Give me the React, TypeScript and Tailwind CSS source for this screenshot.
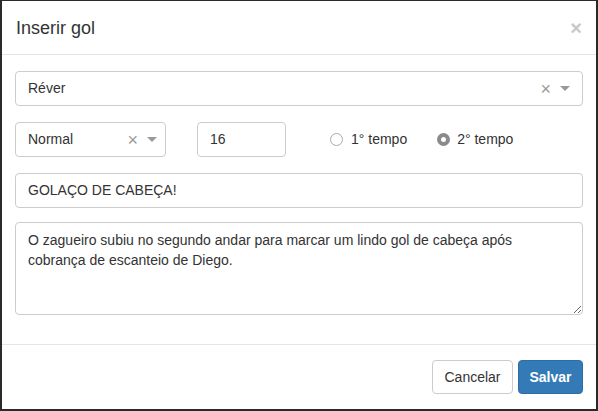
import React, { useState } from "react";

const Caret: React.FC = () => (
    <span className="ml-[9px] inline-block h-0 w-0 border-x-[5px] border-t-[5px] border-x-transparent border-t-[#999]" />
);

const ClearX: React.FC = () => (
    <span className="text-[18px] leading-none text-[#999]">×</span>
);

const App: React.FC = () => {
    const [tempo, setTempo] = useState("2");

    return (
        <div
            className="w-[598px] h-[411px] bg-white border-t border-x-2 border-b-2 border-[#2a2a2a] flex flex-col text-[14px] text-[#333]"
            style={{ fontFamily: '"Liberation Sans", Arial, sans-serif' }}
        >
            {/* Header */}
            <div className="h-[54px] flex items-center justify-between pl-[14px] pr-[14px] border-b border-[#e5e5e5]">
                <h4 className="text-[18px] leading-none text-[#333]">Inserir gol</h4>
                <span className="text-[20px] font-bold leading-none text-[#c8c8c8]">×</span>
            </div>

            {/* Body */}
            <div className="flex-1 px-[13px] pt-[16px] border-b border-[#e5e5e5]">
                <div className="h-[35px] flex items-center justify-between pl-[12px] pr-[12px] border border-[#ccc] rounded">
                    <span className="text-[#333]">Réver</span>
                    <div className="flex items-center">
                        <ClearX />
                        <Caret />
                    </div>
                </div>

                <div className="flex items-center mt-[16px]">
                    <div className="w-[151px] h-[35px] flex items-center justify-between pl-[12px] pr-[8px] border border-[#ccc] rounded">
                        <span className="text-[#333]">Normal</span>
                        <div className="flex items-center">
                            <ClearX />
                            <Caret />
                        </div>
                    </div>
                    <div className="ml-[31px] w-[89px] h-[35px] flex items-center px-[12px] border border-[#ccc] rounded text-[#333]">
                        16
                    </div>
                    <label className="ml-[44px] flex items-center cursor-pointer" onClick={() => setTempo("1")}>
                        <span
                            className={
                                tempo === "1"
                                    ? "w-[13px] h-[13px] rounded-full bg-[#8a8a8a] flex items-center justify-center"
                                    : "w-[13px] h-[13px] rounded-full border border-[#aaa] bg-white"
                            }
                        >
                            {tempo === "1" && <span className="w-[5px] h-[5px] rounded-full bg-white" />}
                        </span>
                        <span className="ml-[8px] text-[#333]">1° tempo</span>
                    </label>
                    <label className="ml-[30px] flex items-center cursor-pointer" onClick={() => setTempo("2")}>
                        <span
                            className={
                                tempo === "2"
                                    ? "w-[13px] h-[13px] rounded-full bg-[#8a8a8a] flex items-center justify-center"
                                    : "w-[13px] h-[13px] rounded-full border border-[#aaa] bg-white"
                            }
                        >
                            {tempo === "2" && <span className="w-[5px] h-[5px] rounded-full bg-white" />}
                        </span>
                        <span className="ml-[7px] text-[#333]">2° tempo</span>
                    </label>
                </div>

                <div className="mt-[16px] h-[35px] flex items-center px-[12px] border border-[#ccc] rounded text-[#333]">
                    GOLAÇO DE CABEÇA!
                </div>

                <textarea
                    readOnly
                    className="mt-[14px] block w-full h-[93px] px-[12px] py-[7px] border border-[#ccc] rounded text-[14px] leading-[20px] text-[#333] outline-none"
                    defaultValue="O zagueiro subiu no segundo andar para marcar um lindo gol de cabeça após cobrança de escanteio de Diego."
                />
            </div>

            {/* Footer */}
            <div className="h-[64px] flex items-center justify-end gap-[5px] pr-[13px]">
                <button className="w-[81px] h-[34px] bg-white border border-[#ccc] rounded text-[#333]">
                    Cancelar
                </button>
                <button className="w-[65px] h-[34px] bg-[#337ab7] border border-[#2e6da4] rounded text-white font-bold">
                    Salvar
                </button>
            </div>
        </div>
    );
};

export default App;
